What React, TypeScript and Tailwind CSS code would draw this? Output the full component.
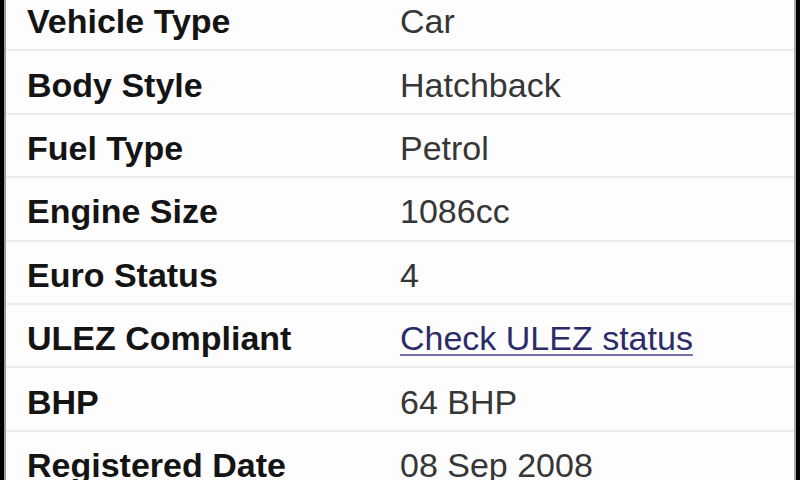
import React from "react";

const rows: { label: string; value: string; link?: boolean }[] = [
  { label: "Vehicle Type", value: "Car" },
  { label: "Body Style", value: "Hatchback" },
  { label: "Fuel Type", value: "Petrol" },
  { label: "Engine Size", value: "1086cc" },
  { label: "Euro Status", value: "4" },
  { label: "ULEZ Compliant", value: "Check ULEZ status", link: true },
  { label: "BHP", value: "64 BHP" },
  { label: "Registered Date", value: "08 Sep 2008" },
];

export default function App() {
  return (
    <div
      className="w-[800px] h-[480px] overflow-hidden bg-white flex"
      style={{ fontFamily: '"Liberation Sans", Arial, sans-serif' }}
    >
      <div className="w-[4px] bg-black" />
      <div className="w-[2px] bg-[#9a9a9a]" />
      <div className="flex-1 flex flex-col mt-[-12px] bg-[#fdfdfd]">
        {rows.map((r) => (
          <div
            key={r.label}
            className="h-[63.4px] shrink-0 flex items-center border-b-2 border-[#ececec] pl-[21px] pt-[5px]"
          >
            <div className="w-[373px] shrink-0 text-[34px] leading-[40px] font-bold text-[#141414]">
              {r.label}
            </div>
            {r.link ? (
              <a
                href="#"
                className="text-[34px] leading-[40px] text-[#2c2c6a] underline decoration-[#7272b0] decoration-2 underline-offset-[4px]"
              >
                {r.value}
              </a>
            ) : (
              <div className="text-[34px] leading-[40px] text-[#363636]">{r.value}</div>
            )}
          </div>
        ))}
      </div>
      <div className="w-[2px] bg-[#a8a8a8]" />
      <div className="w-[4px] bg-black" />
    </div>
  );
}
